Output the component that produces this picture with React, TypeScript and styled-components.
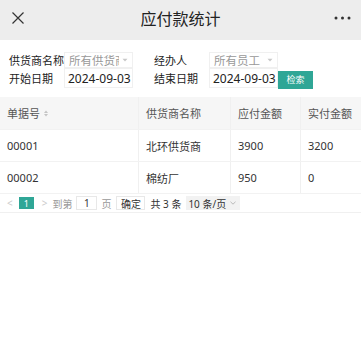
import React from "react";
import styled, { createGlobalStyle } from "styled-components";

const Global = createGlobalStyle`
  html, body { margin: 0; padding: 0; background: #fff; }
  body { font-family: "Noto Sans", "Noto Sans CJK SC", sans-serif; color: #333; }
  * { box-sizing: border-box; }
`;

const TEAL = "#2fa696";

const Page = styled.div`
  width: 361px;
  height: 338px;
  background: #fff;
  overflow: hidden;
`;

const NavBar = styled.div`
  height: 40px;
  background: #ededed;
  display: grid;
  grid-template-columns: 40px 1fr 40px;
  align-items: center;
  padding-bottom: 5px;
`;

const NavTitle = styled.div`
  text-align: center;
  font-size: 16px;
  color: #222;
  font-family: "Noto Sans CJK SC", sans-serif;
`;

const IconCell = styled.div<{ $align: string }>`
  display: flex;
  justify-content: ${(p) => p.$align};
  padding: 0 10px 0 12px;
`;

const Filters = styled.div`
  padding: 12px 0 0 9px;
  display: grid;
  grid-template-columns: 55px 69px 21px 55px 69px 35px;
  grid-template-rows: 16px 20px;
  align-items: center;
  font-family: "Noto Sans CJK SC", sans-serif;
`;

const Label = styled.div`
  font-size: 11px;
  color: #222;
  line-height: 16px;
`;

const Select = styled.div`
  height: 16px;
  border: 1px solid #f0f0f0;
  display: flex;
  align-items: center;
  padding: 0 4px 0 4px;
  font-size: 11.5px;
  color: #999;
  white-space: nowrap;
  overflow: hidden;
`;

const SelectText = styled.span`
  overflow: hidden;
  flex: 1;
  min-width: 0;
`;

const CaretBox = styled.span`
  flex-shrink: 0;
  display: flex;
  align-items: center;
  margin-left: 3px;
`;

const DateInput = styled.div`
  height: 20px;
  border: 1px solid #f0f0f0;
  display: flex;
  align-items: center;
  padding-left: 3px;
  font-family: "Noto Sans", sans-serif;
  font-size: 12px;
  color: #222;
  white-space: nowrap;
`;

const SearchButton = styled.div`
  height: 18px;
  margin-top: 3px;
  background: ${TEAL};
  color: #fff;
  font-size: 9px;
  display: flex;
  align-items: center;
  justify-content: center;
`;

const Table = styled.div`
  margin-top: 9px;
  font-size: 11px;
  font-family: "Noto Sans", "Noto Sans CJK SC", sans-serif;
  color: #333;
`;

const Row = styled.div<{ $head?: boolean }>`
  display: grid;
  grid-template-columns: 139px 92px 70px 60px;
  height: ${(p) => (p.$head ? 33 : 32)}px;
  background: ${(p) => (p.$head ? "#f6f6f6" : "#fff")};
  border-bottom: 1px solid #f2f2f2;
`;

const Cell = styled.div<{ $head?: boolean }>`
  display: flex;
  align-items: center;
  padding-left: 7px;
  border-right: 1px solid #f0f0f0;
  color: ${(p) => (p.$head ? "#555" : "#333")};
  white-space: nowrap;
  overflow: hidden;
  &:last-child { border-right: none; }
`;

const Sort = styled.span`
  display: flex;
  margin-left: 4px;
`;

const Pager = styled.div`
  height: 19px;
  display: flex;
  align-items: center;
  padding-left: 7px;
  border-bottom: 1px solid #f0f0f0;
  font-size: 10px;
  color: #999;
  font-family: "Noto Sans", "Noto Sans CJK SC", sans-serif;
`;

const Arrow = styled.span<{ $ml?: number }>`
  color: #ccc;
  font-size: 10px;
  margin-left: ${(p) => p.$ml ?? 0}px;
`;

const PageNo = styled.div`
  width: 15px;
  height: 12px;
  background: ${TEAL};
  color: #fff;
  font-size: 9px;
  display: flex;
  align-items: center;
  justify-content: center;
  margin-left: 6px;
`;

const PagerText = styled.span<{ $ml: number; $dark?: boolean }>`
  margin-left: ${(p) => p.$ml}px;
  color: ${(p) => (p.$dark ? "#333" : "#999")};
`;

const PageInput = styled.div`
  width: 21px;
  height: 14px;
  border: 1px solid #e8e8e8;
  margin-left: 4px;
  display: flex;
  align-items: center;
  justify-content: center;
  color: #333;
`;

const Confirm = styled.div`
  width: 29px;
  height: 14px;
  border: 1px solid #e8e8e8;
  margin-left: 5px;
  display: flex;
  align-items: center;
  justify-content: center;
  color: #333;
`;

const PageSize = styled.div`
  height: 14px;
  margin-left: 5px;
  padding: 0 4px 0 2px;
  background: #f2f2f2;
  display: flex;
  align-items: center;
  color: #333;
  gap: 4px;
`;

const Caret = () => (
  <CaretBox>
    <svg width="6" height="4" viewBox="0 0 6 4">
      <path d="M0.5 0.8 L5.5 0.8 L3 3.4 Z" fill="#c8c8c8" />
    </svg>
  </CaretBox>
);

const Chevron = () => (
  <svg width="6" height="4" viewBox="0 0 6 4">
    <path d="M0.5 0.8 L3 3.2 L5.5 0.8" fill="none" stroke="#aaa" strokeWidth="0.8" />
  </svg>
);

const rows = [
  ["00001", "北环供货商", "3900", "3200"],
  ["00002", "棉纺厂", "950", "0"],
];

export default function App() {
  return (
    <Page>
      <Global />
      <NavBar>
        <IconCell $align="flex-start">
          <svg width="12" height="12" viewBox="0 0 12 12">
            <path d="M0.5 0.5 L11.5 11.5 M11.5 0.5 L0.5 11.5" stroke="#333" strokeWidth="1.2" />
          </svg>
        </IconCell>
        <NavTitle>应付款统计</NavTitle>
        <IconCell $align="flex-end">
          <svg width="17" height="4" viewBox="0 0 17 4">
            <circle cx="2" cy="2" r="1.5" fill="#333" />
            <circle cx="8.5" cy="2" r="1.5" fill="#333" />
            <circle cx="15" cy="2" r="1.5" fill="#333" />
          </svg>
        </IconCell>
      </NavBar>
      <Filters>
        <Label>供货商名称</Label>
        <Select>
          <SelectText>所有供货商</SelectText>
          <Caret />
        </Select>
        <span />
        <Label>经办人</Label>
        <Select>
          <SelectText>所有员工</SelectText>
          <Caret />
        </Select>
        <span />
        <Label>开始日期</Label>
        <DateInput>2024-09-03</DateInput>
        <span />
        <Label>结束日期</Label>
        <DateInput>2024-09-03</DateInput>
        <SearchButton>检索</SearchButton>
      </Filters>
      <Table>
        <Row $head>
          <Cell $head>
            单据号
            <Sort>
              <svg width="4" height="7" viewBox="0 0 4 7">
                <path d="M0 3 L2 0.5 L4 3 Z M0 4 L2 6.5 L4 4 Z" fill="#c4c4c4" />
              </svg>
            </Sort>
          </Cell>
          <Cell $head>供货商名称</Cell>
          <Cell $head>应付金额</Cell>
          <Cell $head>实付金额</Cell>
        </Row>
        {rows.map((r) => (
          <Row key={r[0]}>
            {r.map((c, i) => (
              <Cell key={i}>{c}</Cell>
            ))}
          </Row>
        ))}
        <Pager>
          <Arrow>&lt;</Arrow>
          <PageNo>1</PageNo>
          <Arrow $ml={8}>&gt;</Arrow>
          <PagerText $ml={5}>到第</PagerText>
          <PageInput>1</PageInput>
          <PagerText $ml={4}>页</PagerText>
          <Confirm>确定</Confirm>
          <PagerText $ml={5} $dark>共 3 条</PagerText>
          <PageSize>
            10 条/页
            <Chevron />
          </PageSize>
        </Pager>
      </Table>
    </Page>
  );
}
